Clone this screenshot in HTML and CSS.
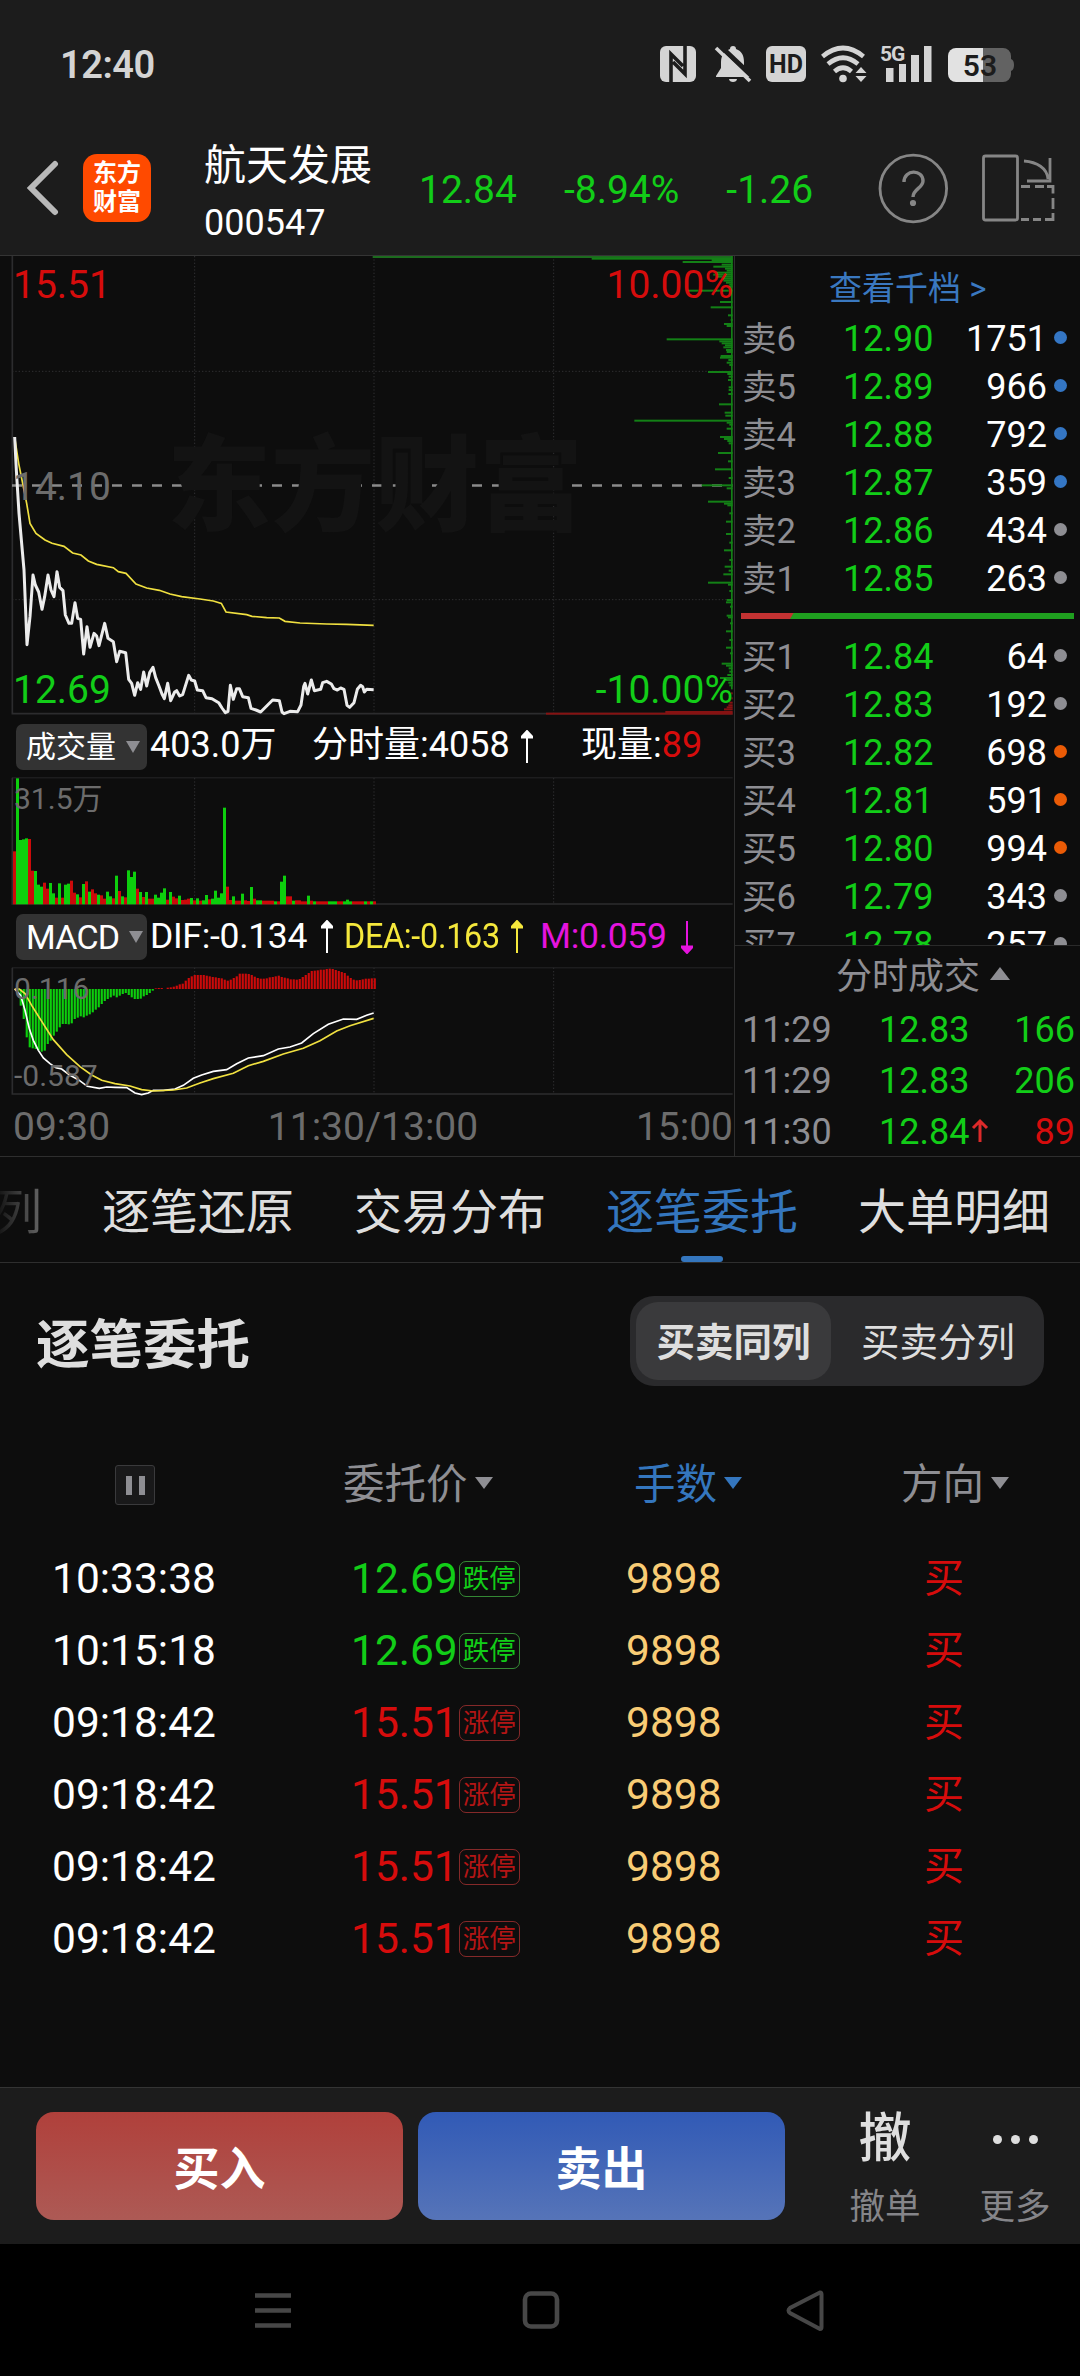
FILE: index.html
```html
<!DOCTYPE html>
<html lang="zh-CN">
<head>
    <meta charset="UTF-8">
    <meta name="viewport" content="width=device-width, initial-scale=1.0">
    <title>航天发展 000547</title>
    <link rel="stylesheet" href="styles.css">
</head>
<body>
    <header class="header">
        <div class="status-bar">
            <span class="clock">12:40</span>
            <svg class="status-icons" width="360" height="44" viewBox="658 42 360 44">
                <!-- nfc -->
                <rect x="660" y="46" width="36" height="36" rx="6" fill="#d4d4d4"/>
                <path d="M671 82V54L683 66M685 46V74L673 62" fill="none" stroke="#1c1c1c" stroke-width="3.6"/>
                <!-- muted bell -->
                <path d="M733 46c2 0 3 1 3 3 6 2 8 7 8 13v6l6 8v1h-34v-1l5-8v-6c0-6 3-11 9-13 0-2 1-3 3-3zM729 79h8c0 4-8 4-8 0z" fill="#d4d4d4"/>
                <path d="M717 43L754 78" stroke="#1c1c1c" stroke-width="5"/>
                <path d="M716 48L750 81" stroke="#d4d4d4" stroke-width="3.6"/>
                <!-- HD -->
                <rect x="766" y="46" width="40" height="36" rx="6" fill="#d4d4d4"/>
                <text x="786" y="73" class="hd">HD</text>
                <!-- wifi -->
                <g fill="none" stroke="#d4d4d4" stroke-width="4.6">
                    <path d="M822.500 56.500Q843 39.500 863.500 56.500"/>
                    <path d="M828 64Q843 51.500 858 64"/>
                    <path d="M834.500 71.500Q843 64 851.500 71.500"/>
                </g>
                <circle cx="843" cy="78.500" r="3.800" fill="#d4d4d4"/>
                <path d="M855.500 73l5.500-6 5.500 6zM855.500 76l5.500 6 5.500-6z" fill="#d4d4d4"/>
                <!-- signal -->
                <text x="880" y="60.500" class="g5">5G</text>
                <path d="M886 68h7.500v14H886zM899 64h7v18h-7zM911 55h8v27h-8zM924 46h7.500v36H924z" fill="#d4d4d4"/>
                <!-- battery -->
                <path d="M983 48h20a8 8 0 0 1 8 8v3q3 1 3 6t-3 6v3a8 8 0 0 1-8 8h-20z" fill="#626262"/>
                <path d="M983 48h-27a8 8 0 0 0-8 8v18a8 8 0 0 0 8 8h27z" fill="#e2e2e2"/>
                <text x="980" y="76" class="level">53</text>
            </svg>
        </div>
        <div class="nav">
            <svg class="back" width="34" height="60" viewBox="0 0 34 60"><path d="M30 6L6 30 30 54" fill="none" stroke="#b9b9b9" stroke-width="6" stroke-linecap="round"/></svg>
            <div class="logo"><span>东方</span><span>财富</span></div>
            <div class="stock">
                <div class="stock-name">航天发展</div>
                <div class="stock-code">000547</div>
            </div>
            <div class="quote green">
                <span>12.84</span><span>-8.94%</span><span>-1.26</span>
            </div>
            <svg class="nav-icons" width="180" height="72" viewBox="877 151 180 72" fill="none" stroke="#868686" stroke-width="2.800">
                <circle cx="913.300" cy="187.500" r="33.300"/>
                <path d="M904 181c0-13 19-13 19-1 0 7-10 8-10 16" stroke-width="3.400"/>
                <circle cx="913" cy="202" r="1.600" stroke-width="3"/>
                <rect x="983.500" y="155" width="34" height="64" rx="2"/>
                <path d="M1024 160c13 1 23 7 24 18M1050 157v23h-23M1021 185.500h9M1035 185.500h9M1047 185.500h6v7M1053 197v11M1053 212v6.500h-8M1041 218.500h-8M1029 218.500h-8"/>
            </svg>
        </div>
    </header>

    <main class="market">
        <section class="charts">
            <div class="chart price-chart">
                <div class="watermark">东方财富</div>
                <svg width="734" height="460" viewBox="0 18 2202 1380" fill="none">
                    <path class="dots" d="M584 18V1391M1122 18V1391M1661 18V1391M36 364H2198M36 1049H2198"/>
                    <path d="M37 18V1391H2198" stroke="#2c2c2e" stroke-width="5"/>
                    <path d="M36 706.500H2198" stroke="#8a8a8a" stroke-width="7" stroke-dasharray="30 30"/>
                    <g id="profile"></g>
                    <polyline stroke="#f0e040" stroke-width="5" points="44,562 56,640 66,690 80,760 90,820 108,850 135,870 156,880 192,889 218,909 243,915 265,933 290,943 340,953 355,965 378,970 408,1002 440,1014 478,1021 510,1032 545,1040 600,1047 640,1053 664,1060 678,1086 740,1094 756,1099 800,1103 838,1104 855,1114 900,1119 980,1122 1040,1123 1121,1126"/>
                    <polyline stroke="#ececec" stroke-width="9" stroke-linejoin="round" points="44,561 49,660 57,790 72,960 81,1184 90,1100 99,975 106,1005 116,1026 126,1078 134,1040 144,975 153,1020 162,1040 171,965 179,1012 189,1022 196,1095 207,1120 215,1120 225,1058 233,1105 242,1108 251,1212 261,1130 270,1192 282,1150 290,1158 297,1187 314,1120 324,1165 340,1175 350,1235 359,1204 377,1208 386,1288 395,1300 404,1336 413,1298 422,1318 431,1266 440,1308 449,1268 459,1252 467,1283 477,1308 486,1332 493,1346 503,1300 512,1352 524,1326 530,1322 539,1338 548,1334 566,1276 574,1290 584,1293 592,1320 608,1322 618,1343 636,1346 656,1358 666,1374 676,1388 684,1384 691,1306 700,1348 710,1316 718,1316 728,1340 745,1343 753,1375 768,1380 782,1386 800,1368 818,1350 838,1352 846,1386 852,1391 870,1384 893,1385 903,1365 911,1310 915,1300 923,1332 934,1290 943,1322 962,1318 968,1298 980,1294 994,1302 1002,1316 1012,1320 1022,1314 1032,1318 1041,1366 1049,1372 1062,1358 1072,1318 1082,1306 1088,1310 1093,1326 1100,1318 1121,1319"/>
                </svg>
                <span class="label top-left red">15.51</span>
                <span class="label top-right red">10.00%</span>
                <span class="label mid-left">14.10</span>
                <span class="label bottom-left green">12.69</span>
                <span class="label bottom-right green">-10.00%</span>
            </div>

            <div class="indicator">
                <button class="select">成交量<i class="caret"></i></button>
                <span class="vol-total">403.0万</span>
                <span class="vol-minute">分时量:4058</span>
                <svg class="arrow" width="12" height="34" viewBox="0 0 12 34"><path d="M6 33V5M0 7.500L6 1l6 6.500z"/></svg>
                <span class="vol-now">现量:<b class="red">89</b></span>
            </div>
            <div class="chart sub-chart">
                <svg width="734" height="129" viewBox="0 200 2202 387" fill="none">
                    <path class="dots" d="M584 203V582M1122 203V582M1661 203V582"/>
                    <path d="M36 202.500H2198" stroke="#262628" stroke-width="3"/>
                    <path d="M37 202V581H2198" stroke="#2c2c2e" stroke-width="5"/>
                    <g id="volume"></g>
                </svg>
                <span class="label small top">31.5万</span>
            </div>

            <div class="indicator macd">
                <button class="select">MACD<i class="caret"></i></button>
                <span class="dif">DIF:-0.134</span>
                <svg class="arrow" width="12" height="34" viewBox="0 0 12 34"><path d="M6 33V5M0 7.500L6 1l6 6.500z"/></svg>
                <span class="dea">DEA:-0.163</span>
                <svg class="arrow dea" width="12" height="34" viewBox="0 0 12 34"><path d="M6 33V5M0 7.500L6 1l6 6.500z"/></svg>
                <span class="m">M:0.059</span>
                <svg class="arrow m" width="12" height="34" viewBox="0 0 12 34"><path d="M6 1V29M0 26.500L6 33l6-6.500z"/></svg>
            </div>
            <div class="chart sub-chart">
                <svg width="734" height="129" viewBox="0 770 2202 387" fill="none">
                    <path class="dots" d="M584 772V1152M1122 772V1152M1661 772V1152"/>
                    <path d="M36 772.500H2198" stroke="#262628" stroke-width="3"/>
                    <path d="M37 772V1151H2198" stroke="#2c2c2e" stroke-width="5"/>
                    <g id="macd"></g>
                    <polyline stroke="#fff" stroke-width="5" points="44,836 62,855 75,900 88,955 100,990 115,1020 130,1043 150,1060 168,1072 185,1076 210,1095 235,1108 262,1128 298,1134 320,1130 345,1131 380,1132 405,1148 425,1153 445,1148 460,1140 490,1140 525,1136 550,1125 580,1104 605,1094 640,1083 680,1078 710,1060 745,1043 790,1036 835,1016 870,1010 905,998 940,970 985,942 1030,926 1070,927 1100,915 1121,908"/>
                    <polyline stroke="#f0e040" stroke-width="5" points="44,836 58,836 75,850 95,885 120,925 160,988 200,1033 240,1069 275,1094 305,1110 345,1120 390,1127 425,1138 460,1142 520,1139 560,1133 600,1118 640,1105 700,1089 745,1066 790,1053 850,1031 910,1014 960,991 1010,962 1050,946 1121,924"/>
                </svg>
                <span class="label small top">0.116</span>
                <span class="label small bottom">-0.587</span>
            </div>
            <div class="time-axis"><span>09:30</span><span>11:30/13:00</span><span>15:00</span></div>
        </section>

        <aside class="book">
            <a class="depth-link">查看千档 &gt;</a>
            <div class="levels">
                <div id="asks"></div>
                <div class="ratio"></div>
                <div id="bids"></div>
            </div>
            <div class="ticks-title">分时成交<i></i></div>
            <div class="tick"><span>11:29</span><span class="green">12.83</span><span class="green">166</span></div>
            <div class="tick"><span>11:29</span><span class="green">12.83</span><span class="green">206</span></div>
            <div class="tick"><span>11:30</span><span class="green">12.84<svg width="18" height="26" viewBox="0 0 18 26"><path d="M9 24V3M2 10L9 3l7 7" fill="none" stroke="#dd2a2a" stroke-width="3"/></svg></span><span class="red">89</span></div>
        </aside>
    </main>

    <nav class="tabs">
        <span class="cut">列</span>
        <span>逐笔还原</span>
        <span>交易分布</span>
        <span class="active">逐笔委托</span>
        <span>大单明细</span>
    </nav>

    <section class="orders">
        <div class="orders-head">
            <h2>逐笔委托</h2>
            <div class="switch"><span class="on">买卖同列</span><span>买卖分列</span></div>
        </div>
        <div class="columns">
            <span class="pause"><i></i><i></i></span>
            <span>委托价<i class="caret"></i></span>
            <span class="sorted">手数<i class="caret"></i></span>
            <span>方向<i class="caret"></i></span>
        </div>
        <div id="orders"></div>
    </section>

    <footer class="trade-bar">
        <button class="buy">买入</button>
        <button class="sell">卖出</button>
        <div class="action cancel"><span class="glyph">撤</span><span>撤单</span></div>
        <div class="action"><span class="glyph dots3"><i></i><i></i><i></i></span><span>更多</span></div>
    </footer>

    <div class="system-nav">
        <svg width="1080" height="132" viewBox="0 2244 1080 132" fill="none" stroke="#474747" stroke-width="4.600">
            <path d="M255 2295.500h36M255 2310.500h36M255 2325.500h36"/>
            <rect x="525" y="2293.500" width="32" height="33" rx="6"/>
            <path d="M820 2292.500L790 2308q-3 2.500 0 5L820 2329q1.500 0 1.500-2V2294.500q0-2-1.500-2z" stroke-width="4"/>
        </svg>
    </div>

    <script>
        const GREEN = '#0dcf0d';
        const RED = '#cc0a0a';

        function rect(x, y, w, h, fill) {
            return `<rect x="${x}" y="${y}" width="${w}" height="${h}" fill="${fill}"/>`;
        }

        // volume per minute, r = up, g = down
        const volume = ('r159 g378 g193 g195 g198 r196 r101 g100 g59 g53 r65 r47 g64 g33 r20 g63 r20 g59 g62 r71 r35 g30 r21 g61 r69 g38 r45 r33 g29 r27 ' +
            'r17 g38 g24 r18 g86 r40 g24 r21 g102 g82 g98 r47 g37 r22 g37 r17 r17 g29 g20 g35 g48 r14 g37 r23 r18 g26 r13 r14 r17 g19 ' +
            'r12 g18 r11 g12 g28 r15 g17 g41 g20 g33 g290 r53 r13 g24 r11 r11 g32 r12 r10 g52 r17 g12 g12 r11 r11 r11 r11 g9 r9 g68 ' +
            'g86 r24 r24 g11 r12 r12 r9 r9 g26 r11 g9 r9 r9 r9 r9 g9 g9 g9 r9 r9 g9 g14 g9 r9 r9 r9 r9 g9 r9 g9 r9').split(' ');
        document.getElementById('volume').innerHTML = volume.map((v, i) => {
            const h = Number(v.slice(1));
            return rect(39 + i * 9, 582 - h, 9, h, v[0] === 'r' ? RED : GREEN);
        }).join('');

        // MACD histogram
        const macd = [0, -8, -50, -90, -145, -175, -178, -180, -184, -188, -185, -165, -155, -140, -128, -115, -105, -105, -106, -103,
            -90, -86, -82, -85, -80, -76, -70, -62, -55, -45, -36, -30, -25, -20, -25, -20, -15, -12, -18, -25,
            -30, -30, -29, -22, -18, -12, -5, 2, 3, 3, 0, 4, 5, 7, 10, 14, 16, 25, 33, 38,
            42, 42, 42, 42, 40, 38, 36, 35, 33, 32, 28, 25, 28, 33, 38, 46, 46, 46, 45, 42,
            37, 33, 31, 31, 32, 35, 36, 38, 40, 36, 34, 32, 29, 29, 28, 30, 36, 42, 48, 54,
            55, 56, 58, 58, 60, 61, 60, 57, 54, 51, 48, 40, 33, 28, 26, 27, 29, 31, 31, 32, 32];
        document.getElementById('macd').innerHTML = macd.map((v, i) =>
            rect(41 + i * 9, v > 0 ? 836 - v : 836, 6.5, Math.abs(v), v > 0 ? RED : GREEN)
        ).join('');

        // price distribution, [y, length]
        const profile = [[26, 423], [30, 63], [36, 150], [44, 33], [50, 58], [56, 23], [62, 18], [68, 48], [74, 58], [80, 48], [86, 33], [92, 28],
            [98, 20], [104, 10], [110, 16], [122, 133], [156, 38], [172, 66], [196, 14], [210, 6], [222, 26], [228, 18], [268, 198], [274, 40],
            [280, 33], [286, 23], [292, 28], [300, 20], [306, 18], [318, 36], [323, 38], [330, 13], [338, 18], [345, 10], [366, 74], [372, 16],
            [380, 12], [390, 14], [412, 12], [420, 12], [432, 13], [463, 41], [488, 24], [497, 22], [512, 295], [518, 18], [524, 10], [536, 18],
            [561, 38], [567, 26], [573, 16], [580, 12], [609, 44], [634, 14], [658, 53], [684, 12], [706, 93], [715, 18], [755, 74], [761, 26],
            [766, 16], [790, 10], [815, 20], [852, 20], [878, 10], [901, 26], [930, 10], [950, 24], [962, 12], [973, 28], [998, 74], [1004, 14],
            [1023, 10], [1050, 18], [1057, 20], [1070, 8], [1097, 18], [1102, 14], [1120, 8], [1144, 20], [1170, 10], [1193, 20], [1210, 8],
            [1241, 33], [1247, 20], [1255, 12], [1265, 10], [1275, 16], [1284, 38], [1290, 20], [1298, 13], [1306, 10]];
        const profileRed = [[1391, 560], [1386, 202], [1378, 26], [1372, 18], [1366, 13], [1358, 10], [1345, 8], [1330, 5]];
        document.getElementById('profile').innerHTML =
            rect(1118, 18, 1080, 6, '#1c6b1e') +
            rect(2193, 18, 5, 1300, '#138016') +
            profile.map(p => rect(2198 - p[1], p[0] - 3, p[1], 6, '#138016')).join('') +
            profileRed.map(p => rect(2198 - p[1], p[0] - 3, p[1], 6, '#861212')).join('');

        function levels(rows) {
            return rows.map(r => `
                <div class="level-row">
                    <span>${r[0]}</span>
                    <span class="green">${r[1]}</span>
                    <span class="qty">${r[2]}</span>
                    <i class="${r[3]}"></i>
                </div>`).join('');
        }
        document.getElementById('asks').innerHTML = levels([
            ['卖6', '12.90', 1751, 'blue'],
            ['卖5', '12.89', 966, 'blue'],
            ['卖4', '12.88', 792, 'blue'],
            ['卖3', '12.87', 359, 'blue'],
            ['卖2', '12.86', 434, 'gray'],
            ['卖1', '12.85', 263, 'gray']
        ]);
        document.getElementById('bids').innerHTML = levels([
            ['买1', '12.84', 64, 'gray'],
            ['买2', '12.83', 192, 'gray'],
            ['买3', '12.82', 698, 'orange'],
            ['买4', '12.81', 591, 'orange'],
            ['买5', '12.80', 994, 'orange'],
            ['买6', '12.79', 343, 'gray'],
            ['买7', '12.78', 257, 'gray']
        ]);

        const orders = [
            ['10:33:38', '12.69', '跌停'],
            ['10:15:18', '12.69', '跌停'],
            ['09:18:42', '15.51', '涨停'],
            ['09:18:42', '15.51', '涨停'],
            ['09:18:42', '15.51', '涨停'],
            ['09:18:42', '15.51', '涨停']
        ];
        document.getElementById('orders').innerHTML = orders.map(o => `
            <div class="order">
                <span>${o[0]}</span>
                <span class="price ${o[2] === '跌停' ? 'green' : 'red'}">${o[1]}<em>${o[2]}</em></span>
                <span class="lots">9898</span>
                <span class="red side">买</span>
            </div>`).join('');
    </script>
</body>
</html>
```
FILE: styles.css
```css
* {
    margin: 0;
    padding: 0;
    box-sizing: border-box;
}

body {
    width: 1080px;
    height: 2376px;
    overflow: hidden;
    display: flex;
    flex-direction: column;
    background: #0d0d0d;
    color: #fff;
    font-family: Roboto, "Noto Sans CJK SC", sans-serif;
}

svg {
    display: block;
}

button {
    border: none;
    color: #fff;
    font-family: inherit;
}

i, em {
    font-style: normal;
}

.green {
    color: #12cd18;
}

.red {
    color: #d60c0c;
}

/* header */
.header {
    height: 256px;
    background: #1c1c1c;
    border-bottom: 1px solid #343434;
}

.status-bar {
    height: 128px;
    padding: 0 62px 0 60px;
    display: flex;
    justify-content: space-between;
    align-items: center;
}

.clock {
    font-size: 38px;
    font-weight: 600;
    color: #d4d4d4;
    letter-spacing: -0.5px;
    padding-top: 2px;
}

.status-icons text {
    font-family: Roboto, sans-serif;
    font-weight: 700;
}

.hd {
    font-size: 25px;
    text-anchor: middle;
    fill: #1c1c1c;
}

.g5 {
    font-size: 21px;
    letter-spacing: -1px;
    fill: #d4d4d4;
}

.status-icons .level {
    font-size: 30px;
    font-weight: 600;
    text-anchor: middle;
    fill: #1c1c1c;
}

.nav {
    height: 119px;
    display: flex;
    align-items: center;
    padding-left: 25px;
}

.logo {
    width: 68px;
    height: 68px;
    margin-left: 24px;
    border-radius: 14px;
    background: #ff4a00;
    display: flex;
    flex-direction: column;
    align-items: center;
    justify-content: center;
    font-size: 24px;
    font-weight: 700;
    line-height: 29px;
}

.stock {
    width: 215px;
    margin-left: 53px;
    padding-top: 14px;
}

.stock-name {
    font-size: 42px;
    line-height: 56px;
    font-weight: 400;
}

.stock-code {
    font-size: 36px;
    line-height: 58px;
}

.quote {
    display: flex;
    gap: 47px;
    width: 458px;
    font-size: 39px;
    padding-top: 4px;
}

/* charts */
.market {
    height: 901px;
    display: flex;
    border-bottom: 1px solid #2e2e2e;
}

.charts {
    width: 735px;
    border-right: 1px solid #2e2e2e;
}

.chart {
    position: relative;
}

.dots {
    stroke: #303032;
    stroke-width: 3;
    stroke-dasharray: 4 6;
}

.label {
    position: absolute;
    font-size: 39px;
    line-height: 40px;
    color: #6c6c6c;
}

.label.red {
    color: #d60c0c;
}

.label.green {
    color: #12cd18;
}

.top-left {
    left: 13px;
    top: 9px;
}

.top-right {
    right: 1px;
    top: 9px;
}

.mid-left {
    left: 13px;
    top: 211px;
}

.bottom-left {
    left: 13px;
    top: 414px;
}

.bottom-right {
    right: 1px;
    top: 414px;
}

.watermark {
    position: absolute;
    left: 167px;
    top: 157px;
    font-size: 104px;
    font-weight: 900;
    line-height: 150px;
    color: #131313;
}

.indicator {
    height: 61px;
    padding-left: 16px;
    display: flex;
    align-items: center;
    font-size: 36px;
    line-height: 42px;
    white-space: nowrap;
}

.indicator > span {
    margin-top: -4px;
}

.select {
    width: 131px;
    height: 46px;
    border-radius: 7px;
    background: #333;
    font-size: 30px;
    line-height: 46px;
    display: flex;
    align-items: center;
    padding-left: 10px;
    margin-right: 3px;
}

.macd .select {
    font-size: 34px;
    letter-spacing: -0.8px;
}

.caret {
    display: inline-block;
    border: 7px solid transparent;
    border-top: 12px solid #8e8e93;
    border-bottom: 0;
    margin-left: 10px;
}

.arrow {
    fill: #fff;
    stroke: #fff;
    stroke-width: 3;
}

.arrow path {
    stroke-linejoin: miter;
    stroke-width: 2;
}

.vol-total {
    width: 162px;
}

.vol-minute {
    width: 209px;
}

.vol-now {
    margin-left: 48px;
}

.vol-now b {
    font-weight: 400;
}

.macd > span {
    margin-top: -2px;
    font-size: 35.500px;
    letter-spacing: -0.3px;
}

.dif {
    width: 171px;
}

span.dea {
    width: 167px;
    margin-left: 11px;
    margin-right: 0;
    transform: scaleX(0.91);
    transform-origin: left;
}

span.m {
    width: 141px;
    margin-left: 17px;
}

.dea {
    color: #f5e83c;
    fill: #f5e83c;
    stroke: #f5e83c;
}

.m {
    color: #e514de;
    fill: #e514de;
    stroke: #e514de;
}

.sub-chart {
    height: 129px;
}

.small {
    font-size: 30px;
}

.small.top {
    left: 14px;
    top: 2px;
}

.small.bottom {
    left: 14px;
    top: 89px;
}

.time-axis {
    display: flex;
    justify-content: space-between;
    padding: 8px 1px 0 13px;
    font-size: 39px;
    line-height: 46px;
    color: #6c6c6c;
}

/* order book */
.book {
    flex: 1;
    color: #8e8e93;
    font-size: 36px;
    overflow: hidden;
}

.depth-link {
    display: block;
    height: 59px;
    padding-left: 94px;
    font-size: 33px;
    line-height: 65px;
    color: #3a78c0;
}

.levels {
    height: 631px;
    overflow: hidden;
    border-bottom: 1px solid #2a2a2a;
}

.level-row {
    height: 48px;
    display: grid;
    grid-template-columns: 101px 91px 113px 28px;
    padding-left: 7px;
    line-height: 48px;
    font-size: 36px;
}

.level-row span:first-child {
    font-size: 34.500px;
}

.qty {
    text-align: right;
    color: #fff;
}

.level-row i {
    width: 13px;
    height: 13px;
    margin: 16px 0 0 7px;
    border-radius: 50%;
}

.blue {
    background: #3476c4;
}

.gray {
    background: #8e8e93;
}

.orange {
    background: #ea5b06;
}

.ratio {
    height: 6px;
    margin: 10px 6px 14px;
    background: linear-gradient(120deg, #c23232 45px, #1f9f1f 46px);
}

.ticks-title {
    height: 59px;
    padding-left: 101px;
    font-size: 36px;
    line-height: 62px;
}

.ticks-title i {
    display: inline-block;
    border: 10px solid transparent;
    border-bottom: 13px solid #8e8e93;
    border-top: 0;
    margin: 0 0 9px 10px;
}

.tick {
    height: 51px;
    display: grid;
    grid-template-columns: 137px 120px 76px;
    padding-left: 7px;
    line-height: 51px;
}

.tick span:last-child {
    text-align: right;
}

.tick svg {
    display: inline-block;
    margin-left: 2px;
}

/* tabs */
.tabs {
    height: 106px;
    display: flex;
    gap: 60px;
    margin-left: -6px;
    border-bottom: 1px solid #2e2e2e;
    font-size: 48px;
    line-height: 112px;
    color: #dedede;
    white-space: nowrap;
}

.tabs span {
    position: relative;
    flex: none;
    height: 105px;
}

.tabs .cut {
    background: linear-gradient(90deg, #0d0d0d, #666);
    -webkit-background-clip: text;
    background-clip: text;
    color: transparent;
}

.tabs .active {
    color: #3476be;
}

.active::after {
    content: "";
    position: absolute;
    left: 75px;
    bottom: 0;
    width: 42px;
    height: 6px;
    border-radius: 3px;
    background: #3476be;
}

/* order list */
.orders {
    flex: 1;
}

.orders-head {
    display: flex;
    justify-content: space-between;
    align-items: center;
    height: 123px;
    padding: 33px 36px 0;
}

.orders-head h2 {
    font-size: 53.500px;
    font-weight: 700;
    line-height: 90px;
    padding-top: 10px;
    color: #dedede;
}

.switch {
    width: 414px;
    height: 90px;
    padding: 6px;
    display: flex;
    border-radius: 24px;
    background: #2a2a2c;
    font-size: 38.500px;
    line-height: 82px;
    color: #dedede;
}

.switch span {
    width: 198px;
    height: 78px;
    text-align: center;
    border-radius: 22px;
}

.switch span + span {
    width: 210px;
    padding-left: 7px;
}

.switch .on {
    background: #3a3a3c;
    font-weight: 700;
}

.columns {
    display: grid;
    grid-template-columns: 228px 291px 267px 1fr;
    align-items: center;
    height: 72px;
    margin-top: 61px;
    padding-left: 115px;
    font-size: 41.500px;
    line-height: 76px;
    color: #8e8e93;
}

.columns .caret {
    border-width: 12px 9px 0;
    margin: 0 0 10px 7px;
}

.sorted {
    color: #3476be;
}

.sorted .caret {
    border-top-color: #3476be;
}

.pause {
    width: 40px;
    height: 40px;
    display: flex;
    justify-content: center;
    align-items: center;
    gap: 7px;
    border: 1px solid #3a3a3c;
    border-radius: 3px;
    background: #19191a;
}

.pause i {
    width: 6px;
    height: 19px;
    background: #8e8e93;
}

.order {
    height: 72px;
    display: grid;
    grid-template-columns: 299px 275px 298px 1fr;
    padding-left: 52px;
    font-size: 42.500px;
    line-height: 72px;
}

#orders {
    padding-top: 24px;
}

.price {
    display: flex;
    align-items: center;
}

.price em {
    width: 61px;
    height: 36px;
    margin-left: 1px;
    border: 1px solid rgba(214, 60, 60, 0.6);
    border-radius: 7px;
    font-size: 26.500px;
    line-height: 34px;
    text-align: center;
}

.price.green em {
    border-color: rgba(70, 190, 70, 0.7);
}

.price.red em {
    color: #b31515;
}

.lots {
    color: #f9cc75;
}

.side {
    font-size: 40px;
}

/* bottom */
.trade-bar {
    height: 157px;
    padding-left: 36px;
    display: flex;
    align-items: center;
    background: #1c1c1c;
    border-top: 1px solid #343434;
}

.buy, .sell {
    width: 367px;
    height: 108px;
    border-radius: 18px;
    font-size: 46px;
    font-weight: 700;
    margin-right: 15px;
    padding-bottom: 3px;
}

.buy {
    background: linear-gradient(#b0403b, #ad5a55);
}

.sell {
    background: linear-gradient(#315ab6, #5674b8);
    margin-right: 0;
}

.action {
    width: 130px;
    display: flex;
    flex-direction: column;
    align-items: center;
    color: #858589;
    font-size: 35.500px;
    line-height: 50px;
    padding-bottom: 4px;
}

.cancel {
    margin-left: 35px;
}

.glyph {
    height: 85px;
    font-size: 53px;
    font-weight: 500;
    line-height: 84px;
    color: #dedede;
}

.dots3 {
    display: flex;
    gap: 9px;
    padding-top: 38px;
}

.dots3 i {
    width: 9px;
    height: 9px;
    border-radius: 50%;
    background: #dedede;
}

.system-nav {
    height: 132px;
    background: #000;
}
```
